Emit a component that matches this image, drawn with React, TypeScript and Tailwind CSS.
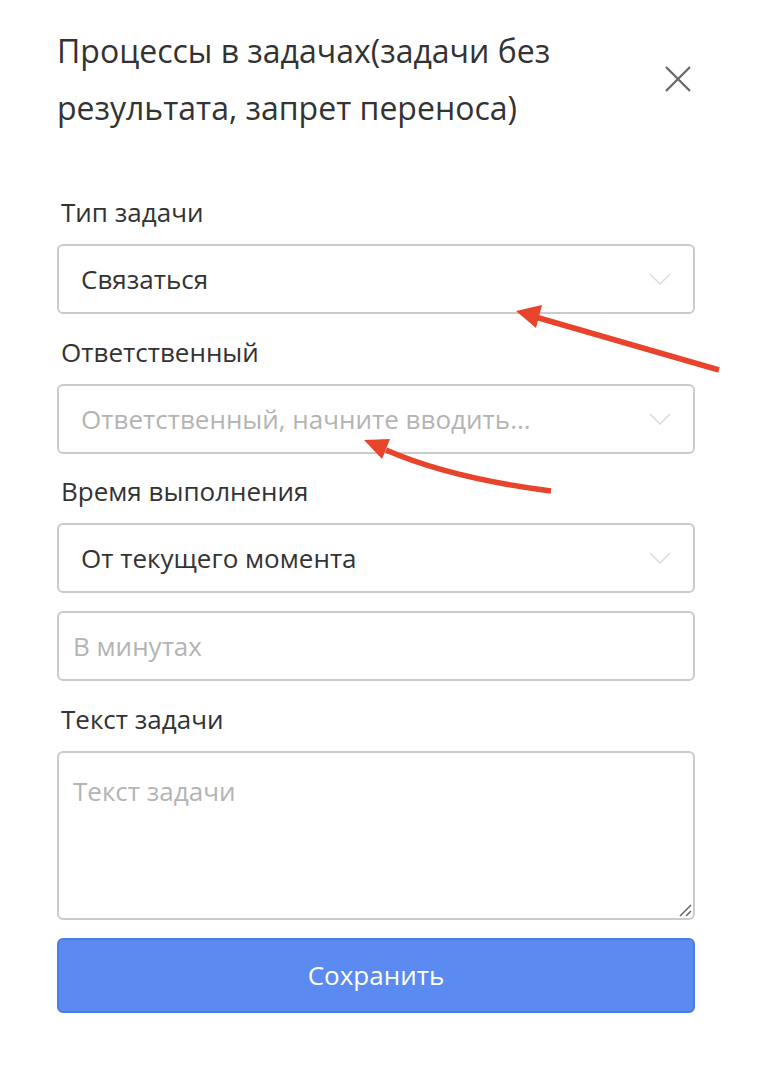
import React from "react";

const Chevron = () => (
  <svg width="22" height="12" viewBox="0 0 22 12" className="shrink-0">
    <path d="M1 1 L11 11 L21 1" fill="none" stroke="#dcdcdc" strokeWidth="1.6" />
  </svg>
);

const Select = ({ text, placeholder }: { text: string; placeholder?: boolean }) => (
  <div className="flex h-[70px] items-center justify-between rounded-[6px] border-2 border-[#cbcbcb] bg-white pl-[22px] pr-[22px]">
    <span className={placeholder ? "text-[#b4b4b4]" : "text-[#333333]"}>{text}</span>
    <Chevron />
  </div>
);

const Label = ({ children, className = "" }: { children: React.ReactNode; className?: string }) => (
  <div className={"h-[32px] pl-[4px] leading-[32px] text-[#333333] " + className}>{children}</div>
);

export default function App() {
  return (
    <div
      className="relative h-[1072px] w-[764px] bg-white text-[26px]"
      style={{ fontFamily: '"Open Sans", "Noto Sans", sans-serif' }}
    >
      <div className="pl-[57px] pr-[69px] pt-[22px]">
        <div className="flex items-start justify-between">
          <h1 className="w-[560px] text-[32px] leading-[57px] text-[#333333]">
            Процессы в задачах(задачи без результата, запрет переноса)
          </h1>
          <div className="mr-[4px] mt-[44px]">
            <svg width="26" height="26" viewBox="0 0 26 26">
              <path d="M1 1 L25 25 M25 1 L1 25" stroke="#666666" strokeWidth="2.2" />
            </svg>
          </div>
        </div>

        <Label className="mt-[60px] mb-[16px]">Тип задачи</Label>
        <Select text="Связаться" />

        <Label className="mt-[22px] mb-[16px]">Ответственный</Label>
        <Select text="Ответственный, начните вводить..." placeholder />

        <Label className="mt-[21px] mb-[16px]">Время выполнения</Label>
        <Select text="От текущего момента" />

        <div className="mt-[18px] flex h-[70px] items-center rounded-[6px] border-2 border-[#cbcbcb] pl-[14px]">
          <span className="text-[#b4b4b4]">В минутах</span>
        </div>

        <Label className="mt-[22px] mb-[16px]">Текст задачи</Label>
        <div className="relative h-[169px] rounded-[6px] border-2 border-[#cbcbcb] pl-[14px] pt-[19px]">
          <span className="text-[#b4b4b4]">Текст задачи</span>
          <svg className="absolute bottom-[1px] right-[1px]" width="14" height="14" viewBox="0 0 14 14">
            <path d="M2 13 L13 2 M8 13 L13 8" stroke="#666666" strokeWidth="1.5" />
          </svg>
        </div>

        <button className="mt-[18px] flex h-[75px] w-full items-center justify-center rounded-[6px] border-2 border-[#4d7be2] bg-[#5b8af0] text-[26px] text-white">
          Сохранить
        </button>
      </div>

      <svg
        className="pointer-events-none absolute left-0 top-0"
        width="764"
        height="1072"
        viewBox="0 0 764 1072"
      >
        <path d="M719 370 L532 316" stroke="#e8432b" strokeWidth="5.5" fill="none" />
        <path d="M516 311 L542 305 L536 328 Z" fill="#e8432b" />
        <path d="M551 491 Q 450 478 386 450" stroke="#e8432b" strokeWidth="5.5" fill="none" />
        <path d="M364 440 L390 439 L382 459 Z" fill="#e8432b" />
      </svg>
    </div>
  );
}
